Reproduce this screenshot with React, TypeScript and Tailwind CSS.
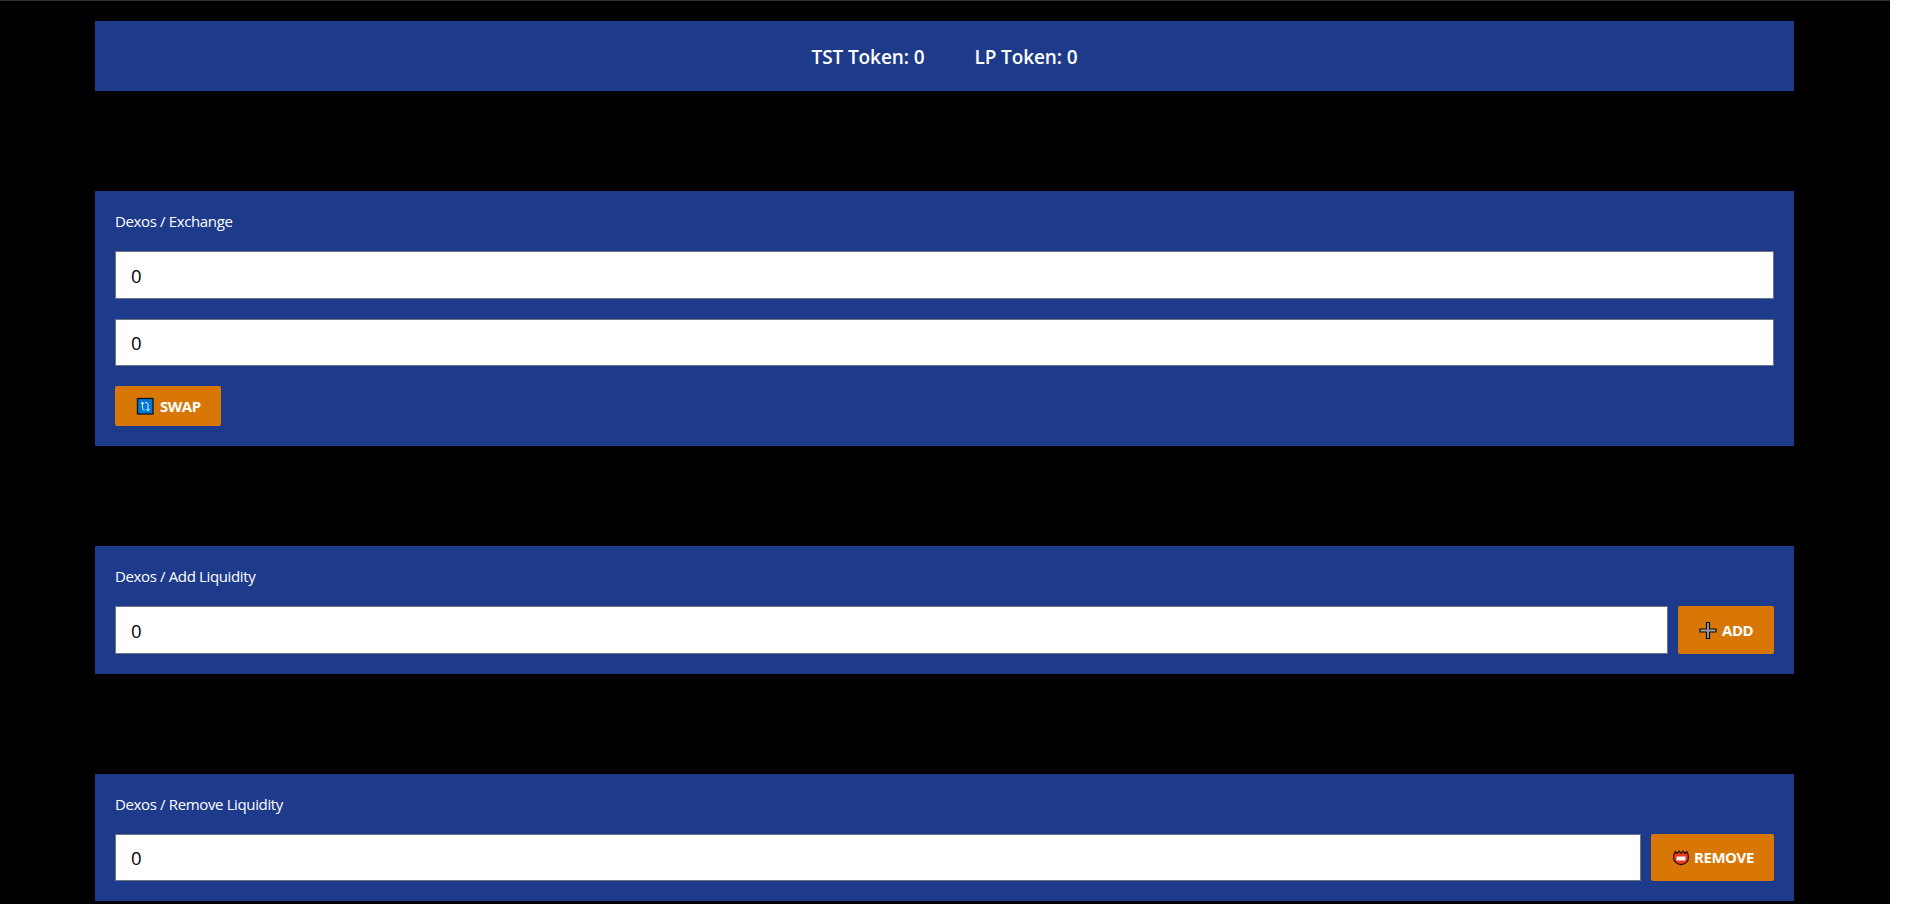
import { useState } from 'react';
import type { ReactNode } from 'react';

function AmountInput({ className }: { className: string }) {
  const [value, setValue] = useState('0');
  return (
    <input
      value={value}
      onChange={(e) => setValue(e.target.value)}
      className={`block min-w-0 border border-[#6b7280] bg-white pl-[15px] pr-4 text-[18.5px] font-normal text-black outline-none ${className}`}
    />
  );
}

function ActionButton({ icon, children, className }: { icon: ReactNode; children: ReactNode; className: string }) {
  return (
    <button
      className={`flex shrink-0 items-center rounded-[2px] bg-[#d97706] pl-[21px] text-[15px] font-bold tracking-[-0.45px] whitespace-nowrap text-white ${className}`}
    >
      {icon}
      {children}
    </button>
  );
}

function SwapIcon() {
  return (
    <svg width="19" height="19" viewBox="0 0 19 19" className="mr-[5px] shrink-0">
      <rect x="1.5" y="1.5" width="15.5" height="15.5" fill="#0078d7" stroke="#10131a" strokeWidth="1.3" />
      <path d="M5 7 L6.5 5 L8 7 M6.5 5.3 V11 Q6.5 13 8.7 13 M9 5.5 H10 Q12 5.5 12 7.5 V13.5 M10.5 12 L12 14 L13.5 12" fill="none" stroke="#d8ecff" strokeWidth="1" />
    </svg>
  );
}

function PlusIcon() {
  return (
    <svg width="19" height="19" viewBox="0 0 19 19" className="mr-[4px] shrink-0">
      <path d="M7.5 1.5 H10.5 V8 H17 V11 H10.5 V17.5 H7.5 V11 H1 V8 H7.5 Z" fill="#a0a0a0" stroke="#0b0b0b" strokeWidth="1.2" />
    </svg>
  );
}

function BadgeIcon() {
  return (
    <svg width="18" height="18" viewBox="0 0 18 18" className="mr-[4px] shrink-0">
      <path d="M3.2 2.6 L5 4.3 L7 2.2 L9 4.3 L11 2.2 L13 4.3 L14.8 2.6 Q16.4 5 16.4 8.5 C16.4 12.8 12.8 15.6 9 15.6 C5.2 15.6 1.6 12.8 1.6 8.5 Q1.6 5 3.2 2.6 Z" fill="#f03a17" stroke="#1a0f08" strokeWidth="1.2" />
      <rect x="4.5" y="7.5" width="9" height="4" fill="#f4f4f4" />
    </svg>
  );
}

function Panel({ title, children, className }: { title: string; children: ReactNode; className: string }) {
  return (
    <section className={`bg-[#1e3a8a] px-5 pt-[19px] ${className}`}>
      <h2 className="mb-[19px] h-[22px] text-[15px] leading-[22px] tracking-[-0.36px] text-white">{title}</h2>
      {children}
    </section>
  );
}

export default function App() {
  return (
    <div className="h-[904px] overflow-hidden bg-white font-['Open_Sans','Noto_Sans',sans-serif]">
      <main className="h-full w-[1890px] border-t border-[#303030] bg-black pt-5 pr-24 pl-[95px]">
        <header className="flex h-[70px] items-center justify-center gap-[50px] bg-[#1e3a8a] pt-0.5 text-[19px] font-semibold tracking-[-0.1px] text-white">
          <span>TST Token: 0</span>
          <span>LP Token: 0</span>
        </header>

        <Panel title="Dexos / Exchange" className="mt-[100px] h-[255px]">
          <AmountInput className="h-12 w-full" />
          <AmountInput className="mt-5 h-[47px] w-full" />
          <ActionButton icon={<SwapIcon />} className="mt-5 h-10 w-[106px]">SWAP</ActionButton>
        </Panel>

        <Panel title="Dexos / Add Liquidity" className="mt-[100px] h-32">
          <div className="flex gap-2.5">
            <AmountInput className="h-12 flex-1" />
            <ActionButton icon={<PlusIcon />} className="h-12 w-24">ADD</ActionButton>
          </div>
        </Panel>

        <Panel title="Dexos / Remove Liquidity" className="mt-[100px] h-[127px]">
          <div className="flex gap-2.5">
            <AmountInput className="h-[47px] flex-1" />
            <ActionButton icon={<BadgeIcon />} className="h-[47px] w-[123px]">REMOVE</ActionButton>
          </div>
        </Panel>
      </main>
    </div>
  );
}
